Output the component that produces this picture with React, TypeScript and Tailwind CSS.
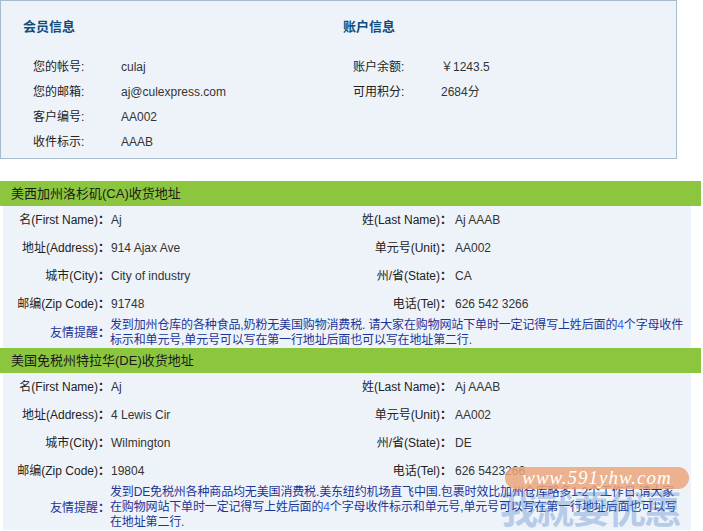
import React from 'react';

// --- 数据 ---
const MEMBER = [
  ['您的帐号:', 'culaj'],
  ['您的邮箱:', 'aj@culexpress.com'],
  ['客户编号:', 'AA002'],
  ['收件标示:', 'AAAB'],
];

const ACCOUNT = [
  ['账户余额:', '￥1243.5'],
  ['可用积分:', '2684分'],
];

const Four = () => <span className="text-[#4466ee]">4</span>;

const WAREHOUSES = [
  {
    title: '美西加州洛杉矶(CA)收货地址',
    rows: [
      ['名(First Name)', 'Aj', '姓(Last Name)', 'Aj AAAB'],
      ['地址(Address)', '914 Ajax Ave', '单元号(Unit)', 'AA002'],
      ['城市(City)', 'City of industry', '州/省(State)', 'CA'],
      ['邮编(Zip Code)', '91748', '电话(Tel)', '626 542 3266'],
    ],
    note: [
      <>发到加州仓库的各种食品,奶粉无美国购物消费税. 请大家在购物网站下单时一定记得写上姓后面的<Four />个字母收件</>,
      <>标示和单元号,单元号可以写在第一行地址后面也可以写在地址第二行.</>,
    ],
  },
  {
    title: '美国免税州特拉华(DE)收货地址',
    rows: [
      ['名(First Name)', 'Aj', '姓(Last Name)', 'Aj AAAB'],
      ['地址(Address)', '4 Lewis Cir', '单元号(Unit)', 'AA002'],
      ['城市(City)', 'Wilmington', '州/省(State)', 'DE'],
      ['邮编(Zip Code)', '19804', '电话(Tel)', '626 5423266'],
    ],
    note: [
      <>发到DE免税州各种商品均无美国消费税.美东纽约机场直飞中国.包裹时效比加州仓库略多1-2个工作日.请大家</>,
      <>在购物网站下单时一定记得写上姓后面的<Four />个字母收件标示和单元号,单元号可以写在第一行地址后面也可以写</>,
      <>在地址第二行.</>,
    ],
  },
];

const font = { fontFamily: '"Liberation Sans", "Noto Sans CJK SC", sans-serif' };

const InfoCol = ({ title, items }: { title: string; items: string[][] }) => (
  <div className="w-[320px] pl-[22px]">
    <h3 className="text-[13px] font-bold text-[#0f4e7e] leading-[18px] mb-[18px]">{title}</h3>
    {items.map(([k, v]) => (
      <div key={k} className="flex h-[25px] items-center pl-[10px]">
        <span className="w-[88px] text-[#222]">{k}</span>
        <span className="text-[#333]">{v}</span>
      </div>
    ))}
  </div>
);

const Warehouse = ({ data }: { data: (typeof WAREHOUSES)[number] }) => (
  <div>
    <div className="h-[25px] bg-[#8cc63f] pl-[11px] flex items-center text-[13px] text-[#1a1a1a] w-[701px]">
      {data.title}
    </div>
    <div className="ml-[3px] w-[688px] bg-[#eef3fa]">
      {data.rows.map((r) => (
        <div key={r[0]} className="flex h-[28px] items-center">
          <span className="w-[107px] text-right text-[#222]">
            {r[0]}<b className="font-bold">：</b>
          </span>
          <span className="w-[232px] pl-[1px] text-[#333]">{r[1]}</span>
          <span className="w-[110px] text-right text-[#222]">
            {r[2]}<b className="font-bold">：</b>
          </span>
          <span className="pl-[3px] text-[#333]">{r[3]}</span>
        </div>
      ))}
      <div className="flex items-center">
        <span className="w-[107px] shrink-0 text-right text-[#1c3596]">
          友情提醒<b className="font-bold">：</b>
        </span>
        <div className="leading-[15px] tracking-[-0.15px] text-[#1c3596] whitespace-nowrap">
          {data.note.map((line, i) => (
            <div key={i}>{line}</div>
          ))}
        </div>
      </div>
    </div>
  </div>
);

export default function App() {
  return (
    <div className="relative w-[703px] h-[531px] overflow-hidden bg-white text-[12px]" style={font}>
      {/* 会员信息 / 账户信息 */}
      <div className="w-[677px] h-[159px] border border-[#a9bccd] bg-[#eef3fa] flex pt-[17px]">
        <InfoCol title="会员信息" items={MEMBER} />
        <InfoCol title="账户信息" items={ACCOUNT} />
      </div>

      <div className="mt-[22px]">
        <Warehouse data={WAREHOUSES[0]} />
      </div>
      <Warehouse data={WAREHOUSES[1]} />

      {/* 水印 */}
      <div className="absolute left-[505px] top-[467px] w-[184px] h-[22px] rounded-full bg-[#eba57a]/85 flex items-center justify-center">
        <span className="text-white italic text-[19px] tracking-[1px]" style={{ fontFamily: '"Liberation Serif", serif' }}>
          www.591yhw.com
        </span>
      </div>
      <div className="absolute left-[500px] top-[488px] text-[38px] font-bold leading-none text-[#4a7fc8]/35 tracking-[-2px]" style={{ fontFamily: '"Noto Sans CJK SC", sans-serif' }}>
        我就要优惠网
      </div>
    </div>
  );
}
